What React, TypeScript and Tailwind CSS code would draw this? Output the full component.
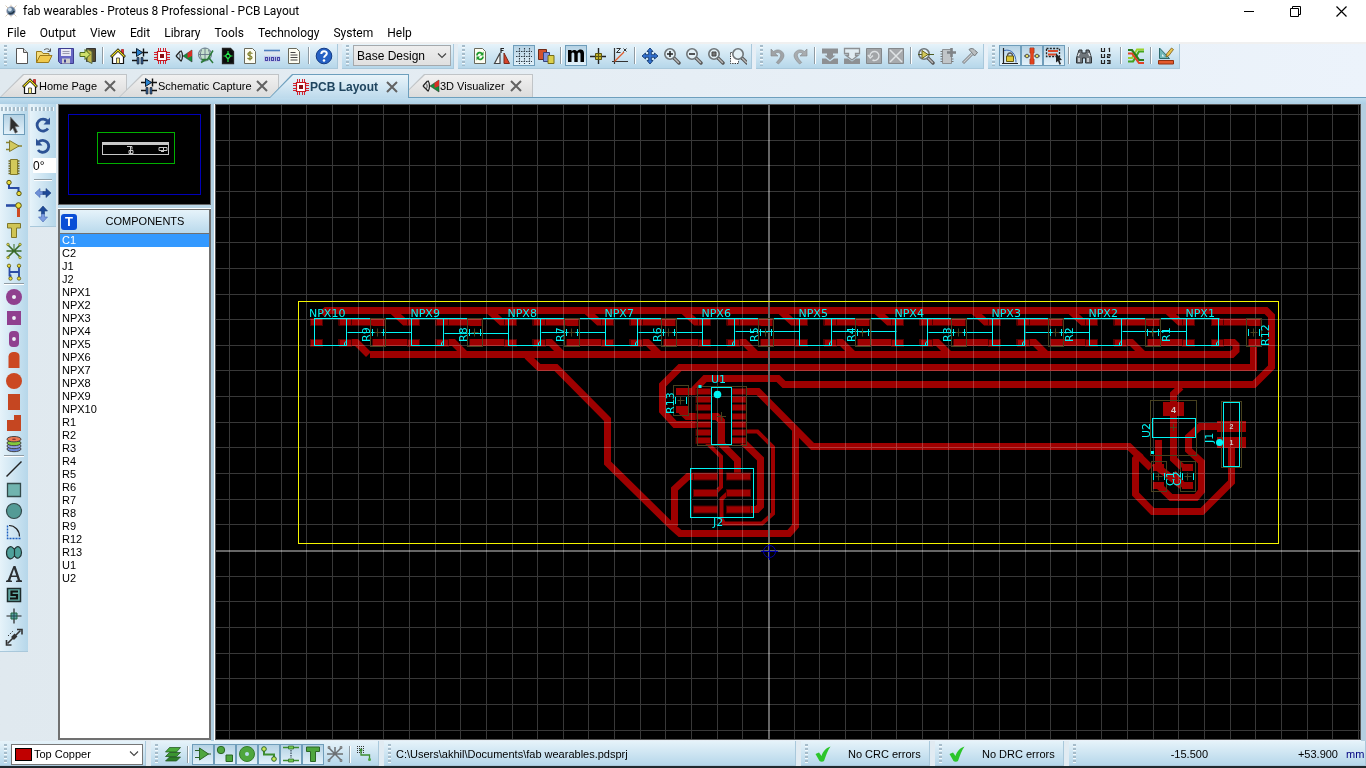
import React from "react";

type IconMap = Record<string, React.ReactNode>;

const lens = (
  <>
    <path d="M11 11l5 5" stroke="#555" strokeWidth="3.4" strokeLinecap="round" />
    <path d="M11.5 11.5l4 4" stroke="#bbb" strokeWidth="1.4" strokeLinecap="round" />
    <circle cx="7" cy="7" r="5.2" fill="#e3f0f6" stroke="#6f7578" strokeWidth="1.6" />
  </>
);

const docShape = <path d="M3.500 1.500h8l3 3v12h-11z" fill="#fdfdf2" stroke="#6a6a5c" />;

const ICONS: IconMap = {
  file: <><path d="M3.500 1.500h7l4 4v11h-11z" fill="#fff" stroke="#555" /><path d="M10.500 1.500v4h4" fill="#ddd" stroke="#555" /></>,
  open: <><path d="M1.500 15.500v-11h5l1.500 2h6v2" fill="#f5dd7a" stroke="#9a7a1c" /><path d="M1.500 15.500l3.500-7h12l-3.500 7z" fill="#f0c94c" stroke="#9a7a1c" /><path d="M9 3c2.500-2 5-1.500 6 1m.5-2.500v3h-3" fill="none" stroke="#555" /></>,
  save: <><path d="M1.500 1.500h15v15h-13l-2-2z" fill="#6767c4" stroke="#3d3d91" /><path d="M4 2h10v7H4z" fill="#e8e8f5" /><path d="M5.500 4.500h7M5.500 6.500h7" stroke="#9a9ab0" /><path d="M5 11.500h8v5H5z" fill="#ccc" /><path d="M7 12.500h2v3H7z" fill="#3d3d91" /></>,
  exit: <><path d="M7.500 1.500h9v13h-9z" fill="#554b2c" stroke="#333" /><path d="M8 2l5 2.500v12L8 14z" fill="#c3b84a" stroke="#564" /><path d="M1 5.500h5v-3l5 5-5 5v-3H1z" fill="#cfe06a" stroke="#4d6b1d" /></>,
  home: <><path d="M12.500 2.500h2v5h-2z" fill="#e33" stroke="#900" strokeWidth=".6" /><path d="M3.500 8.500v8h11v-8l-5.500-5z" fill="#fff" stroke="#111" strokeWidth="1.200" /><path d="M2 10L9 3l7 7" fill="none" stroke="#111" strokeWidth="2.600" /><path d="M2.500 9.500L9 3l6.500 6.500" fill="none" stroke="#f0e020" strokeWidth="1.200" /><path d="M7.500 11h3v5.500h-3z" fill="#f6ea84" stroke="#333" strokeWidth=".8" /></>,
  schem: <><path d="M1 5.500h16M1 13.500h5M12 13.500h5" stroke="#111" strokeWidth="1.300" /><path d="M5.500 1.500l6 4-6 4z" fill="#2882d0" stroke="#123" /><path d="M12.500 1.500v8" stroke="#111" strokeWidth="1.400" /><path d="M6 10.500h2v6.500H6zM10 10.500h2v6.500h-2z" fill="#35619a" stroke="#111" strokeWidth=".6" /></>,
  pcb: <><path d="M5.500 1v16M7.500 1v16M10.500 1v16M12.500 1v16M1 5.500h16M1 7.500h16M1 10.500h16M1 12.500h16" stroke="#d2222e" /><path d="M4.500 4.500h9v9h-9z" fill="#fff" stroke="#c8141e" strokeWidth="1.200" /><path d="M7 7h4v4H7z" fill="#8b0d14" /></>,
  viz: <><path d="M1 9l4.500-5M1 9l5 5M6 3.500c2 3 2 8 0 11" fill="none" stroke="#222" strokeWidth="1.200" /><path d="M4 6.500c1.500 1 1.500 4 0 5.500" fill="none" stroke="#444" /><path d="M8 9l9-6v12z" fill="#12913a" stroke="#333" strokeWidth=".6" /><path d="M12.500 6L17 3v6l-4.500 2z" fill="#d82e25" /></>,
  globe: <><circle cx="8" cy="7.500" r="6.500" fill="#c5e0cd" stroke="#678" /><path d="M1.500 7.500h13M8 1v13M4.500 3c-1.500 3-1.500 6 0 9M11.500 3c1.500 3 1.500 6 0 9" fill="none" stroke="#678" strokeWidth=".9" /><path d="M4.500 12.500h6l5.500-9M12 11l4 5M4 15.500l5-3" fill="none" stroke="#2b7a39" strokeWidth="1.500" /></>,
  code: <><path d="M3.500 1.500h8l3 3v12h-11z" fill="#0b0b0b" stroke="#222" strokeWidth="1.300" /><path d="M4.500 9h2l2.500-3 2.500 3L9 12 6.500 9M11.500 9h2M9 4v2M9 12v3" fill="none" stroke="#25e34b" strokeWidth="1.200" /></>,
  bom: <>{docShape}<path d="M11.500 6.500c-3-1.500-5-.5-4.500 1s4 1 4 3-3 2-4.500.5M9 4v9.500" fill="none" stroke="#7c7c25" strokeWidth="1.200" /></>,
  hex: <><path d="M1 3h16v5H1z" fill="#dfe6ee" /><path d="M1 3.500h16" stroke="#4f7fc0" strokeWidth="1.600" /><path d="M1 9h16v6H1z" fill="#c5cdea" /><path d="M2.500 10.500h2v3h-2zM6.500 10v4M8.500 10.500h2v3h-2zM12.500 10v4M14.500 10.500h2v3h-2z" fill="none" stroke="#4646a8" strokeWidth="1.100" /></>,
  notes: <>{docShape}<path d="M5.500 5.500h5M5.500 8h7M5.500 10.500h7M5.500 13h7" stroke="#444" /></>,
  help: <><circle cx="9" cy="9" r="7.800" fill="#2560c4" stroke="#133c86" /><path d="M6.300 7c0-3.700 5.500-3.500 5.500-.5 0 2-2.700 2-2.700 4.300" fill="none" stroke="#fff" strokeWidth="2" /><circle cx="9" cy="13.500" r="1.300" fill="#fff" /></>,
  refresh: <>{docShape}<path d="M6 8.500c0-3 4-4 5-1.500M12 9.500c0 3-4 4-5 1.500" fill="none" stroke="#1e9a2c" strokeWidth="1.700" /><path d="M12.500 4.500v4H9zM5.500 13.500v-4H9z" fill="#1e9a2c" /></>,
  mirror: <><path d="M1.500 16.500L7 6v10.500z" fill="#f2f5f5" stroke="#444" strokeWidth="1.200" /><path d="M11 6l5.500 10.500H11z" fill="#d7432a" stroke="#7a2a1a" /><path d="M8 6V1.500h3M8 3.500h2.500" fill="none" stroke="#222" strokeWidth="1.200" /></>,
  grid: <path d="M4.500 1v16M9.500 1v16M14.500 1v16M1 4.500h16M1 9.500h16M1 14.500h16" stroke="#2f3b45" strokeWidth="1.100" strokeDasharray="1.500 1" />,
  layers: <><path d="M1.500 2.500h8v10h-8z" fill="#d1512f" stroke="#6f2a17" /><path d="M6.500 5.500h6v9h-6z" fill="#7f92de" stroke="#37447e" /><path d="M11 8.500h6v8h-6z" fill="#dcd04a" stroke="#746d1a" /></>,
  metric: <path d="M1 3h3.500v1.500C6 2.500 9 2.500 10 4.500c2-3 7-2.500 7 1.500v9h-3.500V7c0-2-2.800-2-2.800 0v8H7.300V7c0-2-2.800-2-2.800 0v8H1z" fill="#000" />,
  origin: <><path d="M9.500 1v16M1 9.500h16" stroke="#222" strokeWidth="1.400" /><path d="M6.500 6.500h6v6h-6z" fill="#c3b42b" stroke="#5a5412" /><path d="M9.500 6.500v6M6.500 9.500h6" stroke="#5a5412" /></>,
  polar: <><path d="M3.500 1v16M1 14.500h16" stroke="#333" strokeWidth="1.200" /><path d="M3.500 14.500L13 5" stroke="#e05a2a" strokeWidth="1.200" /><path d="M5.500 1.500h4l-4 4h4M12.500 1.500l3 3M15.500 1.500l-3 3" fill="none" stroke="#333" /></>,
  pan: <path d="M9 1l3 3.500h-1.700V7.700h3.200V6L17 9l-3.500 3v-1.700h-3.200v3.200H12L9 17l-3-3.500h1.700v-3.200H4.500V12L1 9l3.500-3v1.700h3.200V4.500H6z" fill="#3272d2" stroke="#12396f" strokeWidth=".9" />,
  zoomin: <>{lens}<path d="M4 7h6M7 4v6" stroke="#222" strokeWidth="1.500" /></>,
  zoomout: <>{lens}<path d="M4 7h6" stroke="#222" strokeWidth="1.500" /></>,
  zoomall: <>{lens}<path d="M5 5h4v4H5z" fill="#777" stroke="#444" /></>,
  zoomarea: <><path d="M1.500 5.500h8v11h-8z" fill="#fff" stroke="#222" strokeDasharray="1.200 1.200" /><g transform="translate(2 0)">{lens}</g></>,
  undo: <path d="M2 2v7h7L6.300 6.500c3-2.500 6.500 0 5 3.500-.8 2-2.300 3.500-4 5.500l2.200 1.500c4-4 6.500-7 5-10.500-1.700-3.800-6.500-4.800-10-2z" fill="#a0a3a6" stroke="#83888c" strokeWidth=".6" />,
  redo: <path d="M16 2v7H9l2.700-2.500c-3-2.500-6.500 0-5 3.500.8 2 2.300 3.500 4 5.500L8.500 17C4.500 13 2 10 3.500 6.500c1.700-3.800 6.500-4.800 10-2z" fill="#a9acaf" stroke="#83888c" strokeWidth=".6" />,
  bcopy: <path d="M1 1.500h16v5h-5v2h2.500L9 13 3.500 8.500H6v-2H1zM1 11.500h4l4 3 4-3h4V17H1z" fill="#8d9093" />,
  bmove: <><path d="M1.500 6.500v-5h15v5h-4v2H15l-6 4.500-6-4.500h2.500v-2z" fill="#e1ecf2" stroke="#8d9093" strokeWidth="1.300" /><path d="M1 11.500h4l4 3 4-3h4V17H1z" fill="#8d9093" /></>,
  brot: <><path d="M1.500 1.500h15v15h-15z" fill="#a2a5a8" stroke="#84888b" /><path d="M5 9a4.500 4.500 0 1 1 2.500 4M3 8l2.200 3L8 8.500" fill="none" stroke="#dde1e4" strokeWidth="1.400" /></>,
  bdel: <><path d="M1.500 1.500h15v15h-15z" fill="#a7aaad" stroke="#84888b" /><path d="M3 3l12 12M15 3L3 15" stroke="#e0e4e6" strokeWidth="1.500" /></>,
  pick: <>{lens}<path d="M1 7.500h16" stroke="#4b5a22" /><path d="M5 3.500l6 4-6 4z" fill="#d4ca5a" stroke="#6c6422" /></>,
  pkg: <><path d="M3.500 2.500h9v14h-9z" fill="#c1c5c8" stroke="#8d9194" /><path d="M1.500 4.500h2M1.500 7h2M1.500 9.500h2M1.500 12h2M1.500 14.500h2M12.500 12h2M12.500 14.500h2" stroke="#777" /><path d="M12.500 1v9M8 5.500h9" stroke="#7f8386" strokeWidth="2.600" /></>,
  hammer: <><path d="M2 16L11 7" stroke="#7d8184" strokeWidth="3" /><path d="M2.500 15.500L11 7" stroke="#c9cdcf" strokeWidth="1.200" /><path d="M8 2.500c3-2 5-.5 6 1l2.500 2-3 3.500-2-2.500c-1-1-2-2.500-3.500-4z" fill="#b9bdbf" stroke="#73777a" /></>,
  lock: <><path d="M2.500 1v16M1 16.500h16" stroke="#222" strokeWidth="1.200" /><path d="M3 3.500c8-2 12 4 12 12" fill="none" stroke="#3a68b2" /><path d="M6.500 9c0-4 5-4 5 0" fill="none" stroke="#555" strokeWidth="1.300" /><path d="M5.500 9h7v5.500h-7z" fill="#dfc935" stroke="#645a14" /></>,
  neck: <><path d="M7 1h4v5h-1v6h1v5H7v-5h1V6H7z" fill="#e1421c" stroke="#8f2a10" strokeWidth=".8" /><path d="M1 9h6M11 9h6" stroke="#444" /><path d="M7.500 1h3v16h-3z" fill="#e1421c" /><circle cx="4" cy="9" r="1.800" fill="#e6de60" stroke="#555" /><circle cx="14" cy="9" r="1.800" fill="#e6de60" stroke="#555" /></>,
  select: <><path d="M1.500 1.500h13v8h-13z" fill="none" stroke="#222" strokeWidth="1.300" strokeDasharray="2 1.300" /><path d="M3 4h10M3 7.500h8" stroke="#d9482a" strokeWidth="2" /><path d="M11 6l6 7-2.500.3L16 17l-1.500.7-1.500-3.800L11 15.500z" fill="#222" /></>,
  search: <><path d="M4 3h3v3h4V3h3l2.500 8v5h-6v-5h-3v5h-6v-5z" fill="#6f767b" stroke="#2e3336" /><path d="M3 9l1.500-3M15 9l-1.500-3M4 11v4M13 11v4" stroke="#dfe4e7" strokeWidth="1.500" /></>,
  annot: <path d="M4.500 1v3.500h3V1M11.500 2l1-.5V5M4.500 7v3.500h3V7M10 7.500h3v1.500h-2.500v1.500H13M4.500 13v3.500h3V13M10 13.500h3v3h-3M10.500 15H13" fill="none" stroke="#222" strokeWidth="1.200" />,
  auto: <><path d="M1 14.500h5l6-10h5" fill="none" stroke="#43a51f" strokeWidth="2.200" /><path d="M1 11h4l5-8.500h7" fill="none" stroke="#9bd22d" strokeWidth="1.800" /><path d="M1 3h4l7 10h5" fill="none" stroke="#2a7b1c" strokeWidth="2.200" /><path d="M1 6.500h4l7 9.500h5" fill="none" stroke="#e04326" strokeWidth="2" /></>,
  drc: <><path d="M2.500 1v10.500h10z" fill="#6fb8b8" stroke="#2d6a6c" /><path d="M5 7v2.500h2.500z" fill="#e6f3f7" /><path d="M16.500 2.500l-2-1.500-5 6-.5 3 2.800-1.300z" fill="#e8c450" stroke="#7b5a1c" strokeWidth=".8" /><path d="M1.500 13.500h15V17h-15z" fill="#e35a2c" stroke="#93310f" /></>,
  arrow: <path d="M5.500 1l8.500 9.500-4 .2L12.500 16l-2.300 1.200-2.300-5-2.900 2.800z" fill="#2e2e2e" stroke="#777" strokeWidth=".7" />,
  comp: <><path d="M1 5.500h4M1 12.500h4M13 9h4" stroke="#8c8430" strokeWidth="1.300" /><path d="M4.500 3.500L14 9l-9.500 5.500z" fill="#d2c95e" stroke="#81792c" /></>,
  chip: <><path d="M3.500 3h11M3.500 5.500h11M3.500 8h11M3.500 10.500h11M3.500 13h11M3.500 15.500h11" stroke="#6d6620" strokeWidth="1.300" /><path d="M5.500 1.500h7v15h-7z" fill="#d3c95a" stroke="#7f772a" /></>,
  track: <><path d="M4 4v5h9.500v5" fill="none" stroke="#2a4ca5" strokeWidth="2" /><circle cx="4" cy="3.500" r="2.200" fill="#e9dd3c" stroke="#5a5415" /><circle cx="14" cy="14.500" r="2.200" fill="#e9dd3c" stroke="#5a5415" /></>,
  via: <><path d="M1 5.500h10" stroke="#2a4ca5" strokeWidth="2.600" /><path d="M13.500 7v10" stroke="#ce4a22" strokeWidth="3" /><circle cx="13.500" cy="5.500" r="2.800" fill="#e9dd3c" stroke="#5a5415" /></>,
  zone: <path d="M2.500 2.500h13v4.500h-4v9.500h-5V7h-4z" fill="#cfc455" stroke="#7f772a" />,
  rats: <><path d="M3 3l12 12M15 3L3 15M1.500 9h15" stroke="#3a6b28" strokeWidth="1.600" /><path d="M9 2v7" stroke="#3a6b28" /><g fill="#dcd250" stroke="#5a6415" strokeWidth=".6"><circle cx="3" cy="2.500" r="1.300" /><circle cx="15" cy="2.500" r="1.300" /><circle cx="3" cy="15.500" r="1.300" /><circle cx="15" cy="15.500" r="1.300" /></g></>,
  conn: <><path d="M4.500 3v6h9.500V3M4.500 9v3.500h1V15M14 9v6" fill="none" stroke="#2a4ca5" strokeWidth="1.800" /><g fill="#e9dd3c" stroke="#5a5415" strokeWidth=".8"><circle cx="4" cy="2.800" r="1.700" /><circle cx="14" cy="2.800" r="1.700" /><circle cx="5.500" cy="15.500" r="1.700" /><circle cx="14" cy="15.500" r="1.700" /></g></>,
  padround: <><circle cx="9" cy="9" r="8" fill="#90408f" /><circle cx="9" cy="9" r="2" fill="#eef4f8" /></>,
  padsq: <><path d="M2 2h14v14H2z" fill="#90408f" /><circle cx="9" cy="9" r="1.900" fill="#eef4f8" /></>,
  paddil: <><rect x="4" y="1" width="10" height="16" rx="4" fill="#90408f" /><circle cx="9" cy="9" r="1.900" fill="#eef4f8" /></>,
  padedge: <path d="M3.500 17V5.500C4 2 6 1 9 1s5.500 1 5.500 4.500V17z" fill="#cb4822" />,
  padcirc: <circle cx="9" cy="9" r="8" fill="#cb4822" />,
  padrect: <path d="M3 1h12v16H3z" fill="#c54621" />,
  padpoly: <path d="M2 6h7V1h7v16H2z" fill="#c54621" />,
  stack: <><ellipse cx="9" cy="14" rx="7" ry="2.700" fill="#6b86d8" stroke="#444" /><ellipse cx="9" cy="11" rx="7" ry="2.700" fill="#8c9ce0" stroke="#444" /><ellipse cx="9" cy="8" rx="7" ry="2.700" fill="#82c83c" stroke="#444" /><ellipse cx="9" cy="4.200" rx="7" ry="2.700" fill="#ef7a52" stroke="#444" /><ellipse cx="9" cy="4.200" rx="2" ry=".8" fill="#833" /></>,
  line: <path d="M1.500 16.500l15-15" stroke="#222" strokeWidth="1.400" />,
  rect: <path d="M2.500 2.500h13v13h-13z" fill="#70b4af" stroke="#33494a" strokeWidth="1.300" />,
  circle: <circle cx="9" cy="9" r="7.500" fill="#549b96" stroke="#33494a" strokeWidth="1.200" />,
  arc: <><path d="M2.500 2.500v13h13" fill="none" stroke="#1d5fc0" strokeWidth="1.400" strokeDasharray="2 1" /><path d="M4 2.500c6 0 10.500 5 10.500 11" fill="none" stroke="#222" strokeWidth="1.200" /></>,
  path: <path d="M8.500 4.500C6 .5 1.500 3.500 1.500 9S6 16.500 8.500 13c.5-1 1.500-1 2 0 2.500 3 6-.5 6-4.500s-3-8-6-4.500c-.5.8-1.500 1-2 .5zM9.500 4.500v8.500" fill="#4ea09b" stroke="#233" strokeWidth="1.200" />,
  text: <path d="M8.500 1h2l4.700 14 1.800.5V17h-6v-1.300l1.800-.4-1-3.300H6.300l-1 3.300 1.700.4V17H1v-1.300l1.800-.6zM6.800 10.500h4.500L9 4z" fill="#2c3033" fillRule="evenodd" />,
  symbol: <><path d="M2.500 2.500h13v13h-13z" fill="#62aaa5" stroke="#1d2b2b" strokeWidth="1.500" /><path d="M13 5.500H6.500V9H12v3.500H5" fill="none" stroke="#111" strokeWidth="2.200" /></>,
  marker: <><path d="M9 1.500v15M1.500 9h15" stroke="#222" strokeWidth="1.200" /><path d="M6 6h6v6H6z" fill="#57a59f" stroke="#264" /><path d="M9 6v6M6 9h6" stroke="#245" /></>,
  dim: <><path d="M2.500 15.500L15.500 2.500" stroke="#333" strokeWidth="1.600" /><path d="M12 1.500h5v5M1.500 12v5h5" fill="none" stroke="#333" strokeWidth="1.600" /><path d="M7.500 10.500l3.500-3.500" stroke="#333" strokeWidth="4" /><path d="M3 8l5-5" stroke="#333" strokeDasharray="1.500 1.500" /></>,
  cw: <><path d="M13.500 5A6 6 0 1 0 14 12.500" fill="none" stroke="#2c5295" strokeWidth="2.800" /><path d="M16 1.500V8.500H9.500z" fill="#2c5295" /></>,
  ccw: <><path d="M4.500 5A6 6 0 1 1 4 13" fill="none" stroke="#2c5295" strokeWidth="2.800" /><path d="M2 1.500V8.500h6.500z" fill="#2c5295" /></>,
  fliph: <><path d="M9 7.500H6V4.500L1 9l5 4.500v-3h3z" fill="#6f91d8" stroke="#466ab4" strokeWidth=".6" /><path d="M9 7.500h3V4.500L17 9l-5 4.500v-3H9z" fill="#1e4a98" stroke="#173a78" strokeWidth=".6" /></>,
  flipv: <><path d="M7.500 9V6h-3L9 1l4.500 5h-3v3z" fill="#1e4a98" stroke="#173a78" strokeWidth=".6" /><path d="M7.500 9v3h-3L9 17l4.500-5h-3V9z" fill="#7d9ce0" stroke="#466ab4" strokeWidth=".6" /></>,
  slayers: <><path d="M1.500 16l4-4h11l-4 4z" fill="#2f7f29" stroke="#1b4f18" strokeWidth=".7" /><path d="M1.500 11.500l4-4h11l-4 4z" fill="#3b9530" stroke="#1b4f18" strokeWidth=".7" /><path d="M1.500 7l4-4.500h11l-4 4.500z" fill="#4bab3a" stroke="#1b4f18" strokeWidth=".7" /></>,
  scomp: <><path d="M1 5.500h5M1 12.500h5M13 9h4" stroke="#2b5f27" strokeWidth="1.200" /><path d="M5.500 3l9 6-9 6z" fill="#4ea63e" stroke="#2b6626" /></>,
  sshape: <><circle cx="5" cy="5" r="3.700" fill="#4ea63e" stroke="#2b6626" /><path d="M10 10h6.500v6.500H10z" fill="#4ea63e" stroke="#2b6626" /></>,
  spad: <><circle cx="9" cy="9" r="7.500" fill="#4ea63e" stroke="#357d2b" /><circle cx="9" cy="9" r="2" fill="#b7dcef" /></>,
  strack: <><path d="M4 4v5.500h10V14" fill="none" stroke="#3c8d30" strokeWidth="2" /><circle cx="4" cy="4" r="2.300" fill="#c9e85a" stroke="#2b6626" /><circle cx="14" cy="14" r="2.300" fill="#c9e85a" stroke="#2b6626" /></>,
  svia: <><path d="M1 2.500h16M1 15.500h16" stroke="#3c8d30" strokeWidth="1.500" /><path d="M6.500 1h5v3h-5zM6.500 14h5v3h-5z" fill="#73c94c" stroke="#2b6626" strokeWidth=".7" /><path d="M9 5v8" stroke="#345" strokeWidth="1.200" strokeDasharray="1.500 1" /></>,
  szone: <path d="M2.500 2h13v4.500h-4v10h-5v-10h-4z" fill="#4ea63e" stroke="#2b6626" />,
  srats: <><path d="M3 3l12 12M15 3L3 15M1 9h16M9 2v7" stroke="#6c7073" strokeWidth="1.500" /><path d="M2 1.500h2v2H2zM14 1.500h2v2h-2zM2 14.500h2v2H2zM14 14.500h2v2h-2z" fill="#9a9da0" stroke="#666" strokeWidth=".6" /></>,
  sfilter: <><path d="M1 1.500h7M1 3.500h7M1 5.500h7M1 7.500h7" stroke="#333" strokeDasharray="1 1" /><path d="M5 5v5h8.500v4" fill="none" stroke="#3c8d30" strokeWidth="1.300" /><circle cx="5" cy="5" r="1.500" fill="#3c8d30" /><circle cx="13.500" cy="14.500" r="1.500" fill="#4ea63e" /></>,
  check: <path d="M1.500 9l3.500-1.500 2.500 3.500C9 6.500 11.500 3 16.500 1.500c-3 4-4.500 9-6.500 14.500-1 1-3.500 1-4.500 0z" fill="#2cc52b" />,
  app: <><path d="M2 2l14 14M16 2L2 16M9 1v16" stroke="#c9b99d" strokeWidth="1" /><circle cx="9" cy="9" r="5.500" fill="#5b7894" stroke="#aab" /><circle cx="7.500" cy="7" r="2.500" fill="#c7dbea" /><path d="M6 12c3 1 6 0 7-3" stroke="#23374a" strokeWidth="2" fill="none" /></>,
};

function Icon({ name, className = "size-[18px]" }: { name: string; className?: string }) {
  return (
    <svg viewBox="0 0 18 18" fill="none" aria-hidden="true" className={`shrink-0 ${className}`}>
      {ICONS[name]}
    </svg>
  );
}

function HGrip() {
  return (
    <span className="mx-1 my-px w-[3px] shrink-0 self-stretch bg-[repeating-linear-gradient(to_bottom,#a6bcca_0_2px,#f4fafd_2px_3px,transparent_3px_4px)]" />
  );
}

function HSep() {
  return (
    <span className="flex w-2 shrink-0 justify-center">
      <span className="h-[17px] w-0.5 border-r border-white bg-[#8f9ba3]" />
    </span>
  );
}

function ToolButton({ item }: { item: string }) {
  const on = item.startsWith("*");
  const name = on ? item.slice(1) : item;
  return (
    <button
      type="button"
      aria-label={name}
      aria-pressed={on}
      className={`flex h-[21px] w-[22px] shrink-0 items-center justify-center ${
        on ? "border border-[#6f9dba] bg-linear-to-b from-[#b5d2e4] to-[#e2f1fa]" : ""
      }`}
    >
      <Icon name={name} />
    </button>
  );
}

/* Entries starting with "*" are latched down; "|" is a divider. */
function Buttons({ items }: { items: string[] }) {
  return (
    <>
      {items.map((it, i) => (it === "|" ? <HSep key={i} /> : <ToolButton key={i} item={it} />))}
    </>
  );
}

const BAR = "flex shrink-0 items-center border-r border-b border-[#a9c8db] bg-linear-to-b from-[#e6f3fa] to-[#b6d7ea]";

function Toolbar({ items, children, className = "h-[25px] pb-px" }: { items?: string[]; children?: React.ReactNode; className?: string }) {
  return (
    <div role="toolbar" className={`${BAR} pr-0.5 ${className}`}>
      <HGrip />
      {children}
      {items && <Buttons items={items} />}
    </div>
  );
}

function VToolbar({ children, className }: { children: React.ReactNode; className: string }) {
  return (
    <div
      role="toolbar"
      className={`flex shrink-0 flex-col items-center self-start border-b border-[#a9c8db] bg-linear-to-r from-[#e6f3fa] to-[#b6d7ea] ${className}`}
    >
      <span className="mx-px my-[3px] h-1 self-stretch bg-[repeating-linear-gradient(to_right,#a6bcca_0_2px,#f4fafd_2px_3px,transparent_3px_4px)]" />
      {children}
    </div>
  );
}

function VButtons({ items }: { items: string[] }) {
  return (
    <>
      {items.map((it, i) =>
        it === "|" ? (
          <span key={i} className="flex h-1 items-center self-stretch px-1">
            <span className="h-0.5 w-full border-b border-white bg-[#8f9ba3]" />
          </span>
        ) : (
          <ToolButton key={i} item={it} />
        ),
      )}
    </>
  );
}

function Tab({ icon, label, active, className = "" }: { icon: string; label: string; active?: boolean; className?: string }) {
  return (
    <div
      className={`shrink-0 pt-px pr-px [clip-path:polygon(23px_0,100%_0,100%_100%,0_100%)] ${
        active ? "z-10 h-6 bg-[#6d9fbd]" : "h-[23px] bg-[#c0c4c7]"
      } ${className}`}
    >
      <div
        className={`flex h-full items-center [clip-path:polygon(24px_0,100%_0,100%_100%,1px_100%)] ${
          active ? "bg-linear-to-b from-[#e9f4fa] to-[#bddaec] pl-[23px]" : "bg-linear-to-b from-[#f1f1f1] to-[#dcdcdc] pl-[21px]"
        }`}
      >
        <button type="button" className={`flex items-center ${active ? "text-[12px] font-bold text-[#20455f]" : "text-black"}`}>
          <Icon name={icon} />
          <span className="whitespace-nowrap">{label}</span>
        </button>
        <button type="button" aria-label={`Close ${label}`} className="mr-[9px] ml-auto">
          <svg viewBox="0 0 14 14" className="size-3.5">
            <path d="M2 2l10 10M12 2L2 12" stroke="#626262" strokeWidth="2" />
          </svg>
        </button>
      </div>
    </div>
  );
}

const PARTS = [
  "C1", "C2", "J1", "J2", "NPX1", "NPX2", "NPX3", "NPX4", "NPX5", "NPX6", "NPX7", "NPX8", "NPX9", "NPX10",
  "R1", "R2", "R3", "R4", "R5", "R6", "R7", "R8", "R9", "R12", "R13", "U1", "U2",
];

const CYAN = "#00f5f5";
const OLIVE = "#47411f";

function Label({ x, y, vertical, children }: { x: number; y: number; vertical?: boolean; children: string }) {
  return (
    <text
      x={x}
      y={y}
      transform={vertical ? `rotate(-90 ${x} ${y})` : undefined}
      fill={CYAN}
      className="font-['DejaVu_Sans',sans-serif] text-[11px]"
    >
      {children}
    </text>
  );
}

function Pad({ x, y, w, h }: { x: number; y: number; w: number; h: number }) {
  return <rect x={x} y={y} width={w} height={h} fill="#9e0000" stroke="#500000" />;
}

/* Two-pad chip part standing upright; x, y is the top left of its courtyard. */
function Chip({ x, y, h = 30 }: { x: number; y: number; h?: number }) {
  const cy = y + h / 2;
  return (
    <g>
      <rect x={x} y={y} width="15" height={h} fill="none" stroke={OLIVE} />
      <path d={`M${x + 4} ${cy}h7M${x + 7} ${cy - 4}v8`} stroke={OLIVE} />
      <path d={`M${x + 2} ${cy - 3.5}v7M${x + 13} ${cy - 3.5}v7`} stroke={CYAN} />
    </g>
  );
}

const MODULES = Array.from({ length: 10 }, (_, i) => Math.round(314 + 96.9 * i) + 0.5);
const LINK_Y = [332.5, 333.5, 332.5, 332.5, 331.5, 331.5, 332.5, 332.5, 331.5];

const ROUTES = [
  "M322 314L326 310.500H1266L1271.500 316V367L1254 384.500H784L778 378.500H705L694 390",
  "M1253.500 340V367.500H680L662.500 385V411L675 424.500H706",
  "M370 354.500H1232L1236 350.500V345L1233.500 342.500H1215",
  "M527 356L539 367.500H556L607.500 419.500V463L672 526.500L680 533.500H789L795.500 526V430",
  "M674.500 526V489L688 476.500H710",
  "M738 391.500H758L812.500 446.500H1129L1151 468",
  "M676 391.500H700M681 411L687 416.500H717L721.500 421V444L737.500 460V474",
  "M742 441L760.500 459V506L757 509.500H735",
  "M1220 322H1256M1181 387L1173.500 394V459L1182 467",
  "M1240 426.500H1200L1188.500 437V450L1201.500 462V491L1196 497.500H1171L1159 486",
  "M1141 453L1135.500 459V494L1152.500 511.500H1202L1231.500 482V444",
  "M1158.500 440V468L1182 486M1173 473L1183 486",
];

const THIN_ROUTES = [
  "M706 442L721 456.500V487L716 492",
  "M744 431.500H757.500L773 447V513.500L762 523.500H724L721.500 519V499L728 493",
];

/* Grid lines either side of the origin; the axes themselves are drawn brighter. */
const STEPS = Array.from({ length: 60 }, (_, i) => i - 30).filter((n) => n !== 0);
const GRID_X = STEPS.map((n) => Math.round(769 + n * 25.65) - 0.5);
const GRID_Y = STEPS.map((n) => Math.round(551 + n * 25.65) - 0.5);

function Board() {
  return (
    <svg viewBox="216 105 1144 634" preserveAspectRatio="xMidYMid slice" role="img" aria-label="PCB layout" className="block size-full" fill="none">
      <g stroke="#9e0000" strokeWidth="7">
        {ROUTES.map((d) => <path key={d} d={d} />)}
        {MODULES.map((x, i) => (
          <g key={x}>
            {i > 0 && <path d={`M${x - 20} 310L${x - 7} 322H${x + 8}`} />}
            {i < 9 && <path d={`M${x + 24} 322H${x + 68}M${x + 60} 342.500H${x + 100}M${x + 24} 342.500H${x + 42}L${x + 54} 354.500`} />}
          </g>
        ))}
      </g>
      <g stroke="#9e0000" strokeWidth="4">
        {THIN_ROUTES.map((d) => <path key={d} d={d} />)}
      </g>
      {MODULES.map((x, i) => (
        <g key={x}>
          {[-4, 25].map((dx) => [318.5, 339.5].map((y) => <Pad key={`${dx}-${y}`} x={x + dx} y={y} w={12} h={7} />))}
          {[319, 339].map((y) => <rect key={y} x={x + (i === 9 ? 62 : 58)} y={y} width="12" height="7" fill="#9e0000" />)}
        </g>
      ))}
      {[391.5, 399.5, 407.5, 416.5, 424.5, 432.5, 440.5].map((y) => (
        <g key={y}>
          <Pad x={696} y={y - 3} w={15} h={6} />
          <Pad x={732} y={y - 3} w={14} h={6} />
        </g>
      ))}
      {[476.5, 493, 509.5].map((y) => (
        <g key={y}>
          <Pad x={693.5} y={y - 3.5} w={24} h={7} />
          <Pad x={726.5} y={y - 3.5} w={24} h={7} />
        </g>
      ))}
      <g fill="#9e0000">
        <path d="M676 388h12v7h-12zM676 406h12v7h-12zM1163 402h21v14h-21z" />
        <path d="M1153 464h11v7h-11zM1153 482h11v7h-11zM1182 464h11v7h-11zM1182 482h11v7h-11z" />
        <path d="M1217 421h29v11h-29zM1217 437h29v11h-29z" />
      </g>

      <path d="M769 0V1000M0 551H1600" stroke="#666666" strokeWidth="2" />
      <g stroke="#383838" className="mix-blend-screen">
        {GRID_X.map((x) => <path key={x} d={`M${x} 0V1000`} />)}
        {GRID_Y.map((y) => <path key={y} d={`M0 ${y}H1600`} />)}
      </g>
      <g stroke="#0000a8">
        <circle cx="769.500" cy="551.500" r="6" />
        <path d="M761 551.500h17M769.500 543v17" />
      </g>

      <rect x="298.500" y="301.500" width="980" height="242" stroke="#f5f500" />

      <path d="M314.500 318.500H1219.500" stroke={CYAN} />
      {MODULES.map((x, i) => (
        <g key={x}>
          <rect x={x} y="318.500" width="32" height="27" stroke={CYAN} />
          <path d={`M${x + 30} 345v-2l2-2`} stroke={CYAN} />
          {i < 9 && <path d={`M${x + 33} ${LINK_Y[i]}H${x + 97}`} stroke={CYAN} />}
          <Chip x={x + (i < 9 ? 56 : 60)} y={318.5} h={28} />
          <Label x={i === 0 ? 309 : x - 1} y={317}>{`NPX${10 - i}`}</Label>
          {i < 7 && <Label x={x + 55} y={342} vertical>{`R${9 - i}`}</Label>}
          {(i === 7 || i === 8) && <Label x={x + 80} y={342} vertical>{`R${9 - i}`}</Label>}
        </g>
      ))}
      <Label x={1269} y={346} vertical>R12</Label>

      <Chip x={673.5} y={385.5} />
      <Label x={674} y={414} vertical>R13</Label>
      <rect x="697.500" y="386.500" width="49" height="59" stroke={OLIVE} />
      <path d="M717 416.500h9M721.500 412v9" stroke={OLIVE} />
      <rect x="711.500" y="387.500" width="20" height="57" stroke={CYAN} />
      <circle cx="717.500" cy="394.500" r="3.800" fill={CYAN} />
      <rect x="698.500" y="385" width="3" height="3" fill={CYAN} />
      <Label x={711} y={383}>U1</Label>
      <rect x="690.500" y="468.500" width="63" height="49" stroke={CYAN} />
      <Label x={713} y={526}>J2</Label>

      <rect x="1150.500" y="400.500" width="46" height="55" stroke={OLIVE} />
      <path d="M1170 427.500h7M1173.500 424v7" stroke={OLIVE} />
      <rect x="1152.500" y="418.500" width="43" height="19" stroke={CYAN} />
      <rect x="1151" y="451" width="3" height="3" fill={CYAN} />
      <Label x={1150} y={438} vertical>U2</Label>
      <Chip x={1151.5} y={461.5} />
      <Chip x={1180.5} y={461.5} />
      <Label x={1174} y={486} vertical>C1</Label>
      <Label x={1181} y={486} vertical>C2</Label>
      <rect x="1221.500" y="401.500" width="20" height="66" stroke={OLIVE} />
      <rect x="1223.500" y="402.500" width="16" height="64" stroke={CYAN} />
      <circle cx="1219.500" cy="442.500" r="3.500" fill={CYAN} />
      <Label x={1213} y={443} vertical>J1</Label>
      <g fill="#d0c8c8" textAnchor="middle" className="font-['Liberation_Sans',sans-serif] font-bold">
        <text x="1173.500" y="413" className="text-[9px]">4</text>
        <text x="1231.500" y="429" className="text-[7px]">2</text>
        <text x="1231.500" y="445" className="text-[7px]">1</text>
      </g>
    </svg>
  );
}

function Chevron() {
  return (
    <svg viewBox="0 0 10 6" className="pointer-events-none absolute top-1/2 right-1 h-1.5 w-2.5 -translate-y-1/2" fill="none">
      <path d="M1 .5l4 4 4-4" stroke="#444" strokeWidth="1.100" />
    </svg>
  );
}

const FOOT = "h-[25px] pt-0.5";

export default function App() {
  return (
    <div className="flex h-screen flex-col overflow-hidden bg-linear-to-r from-[#e0e9ef] to-[#ecf3fb] font-['Liberation_Sans',Arial,sans-serif] text-[11px] text-black select-none">
      <header className="shrink-0 bg-white font-[Roboto,'Noto_Sans',sans-serif] text-[12px]">
        <div className="flex h-[22px] items-center pr-0.5 pl-1">
          <Icon name="app" className="size-3.5" />
          <h1 className="ml-[5px]">fab wearables - Proteus 8 Professional - PCB Layout</h1>
          <div className="ml-auto flex">
            <button type="button" aria-label="Minimize" className="flex w-[46px] justify-center">
              <svg viewBox="0 0 11 11" className="size-[11px]" stroke="#000"><path d="M0 5.500h10" /></svg>
            </button>
            <button type="button" aria-label="Restore" className="flex w-[46px] justify-center">
              <svg viewBox="0 0 11 11" className="size-[11px]" stroke="#000" fill="none"><path d="M.5 2.500h8v8h-8zM2.500 2.500v-2h8v8h-2" /></svg>
            </button>
            <button type="button" aria-label="Close" className="flex w-[46px] justify-center">
              <svg viewBox="0 0 11 11" className="size-[11px]" stroke="#000"><path d="M.5 .5l10 10M10.500 .5l-10 10" strokeWidth="1.200" /></svg>
            </button>
          </div>
        </div>
        <nav className="flex h-5 items-center gap-[14px] pt-0.5 pl-[7px]">
          {["File", "Output", "View", "Edit", "Library", "Tools", "Technology", "System", "Help"].map((m) => (
            <button key={m} type="button">{m}</button>
          ))}
        </nav>
      </header>

      <div className="flex shrink-0 gap-1 border-t-2 border-[#f0f0f0]">
        <Toolbar items={["file", "open", "save", "exit", "|", "home", "schem", "pcb", "viz", "globe", "code", "bom", "hex", "notes", "|", "help"]} />
        <Toolbar>
          <div className="relative w-[98px]">
            <select aria-label="Design variant" className="h-[21px] w-full appearance-none border border-[#a5a9ac] bg-linear-to-b from-[#eeeeee] to-[#e0e0e0] pl-[3px] text-[12px]">
              <option>Base Design</option>
            </select>
            <Chevron />
          </div>
        </Toolbar>
        <Toolbar items={["refresh", "mirror", "*grid", "layers", "|", "*metric", "origin", "polar", "|", "pan", "zoomin", "zoomout", "zoomall", "zoomarea"]} />
        <Toolbar items={["undo", "redo", "|", "bcopy", "bmove", "brot", "bdel", "|", "pick", "pkg", "hammer"]} />
        <Toolbar items={["*lock", "*neck", "*select", "|", "search", "annot", "|", "auto", "|", "drc"]} />
      </div>

      <div className="flex h-7 shrink-0 items-start pt-[5px]">
        <Tab icon="home" label="Home Page" className="w-[127px]" />
        <Tab icon="schem" label="Schematic Capture" className="-ml-2 w-[160px]" />
        <Tab icon="pcb" label="PCB Layout" active className="-ml-2.5 w-[140px]" />
        <Tab icon="viz" label="3D Visualizer" className="-ml-2 w-[132px]" />
      </div>
      <div className="h-[7px] shrink-0 border-t border-[#6d9fbd] bg-linear-to-b from-[#c0ddee] to-[#accfe5]" />

      <main className="flex min-h-0 flex-1">
        <VToolbar className="w-7 pb-1">
          <VButtons
            items={[
              "*arrow", "comp", "chip", "track", "via", "zone", "rats", "conn", "|",
              "padround", "padsq", "paddil", "padedge", "padcirc", "padrect", "padpoly", "stack", "|",
              "line", "rect", "circle", "arc", "path", "text", "symbol", "marker", "dim",
            ]}
          />
        </VToolbar>
        <VToolbar className="ml-0.5 w-[26px] pb-0.5">
          <VButtons items={["cw", "ccw"]} />
          <input aria-label="Rotation angle" defaultValue="0°" className="my-0.5 h-[15px] w-[23px] self-end bg-white text-[12px]" />
          <span className="h-[3px]" />
          <VButtons items={["|", "fliph", "flipv"]} />
        </VToolbar>

        <aside className="ml-0.5 flex w-[153px] shrink-0 flex-col">
          <div className="h-[101px] shrink-0 border border-[#666] bg-black">
            <svg viewBox="59 105 151 99" className="size-full" fill="none">
              <rect x="68.500" y="114.500" width="132" height="80" stroke="#0000b8" />
              <rect x="97.500" y="132.500" width="77" height="31" stroke="#00b000" />
              <rect x="102.500" y="142.500" width="66" height="12" stroke="#c8c8c8" />
              <path d="M103 143.500h65" stroke="#c8c8c8" strokeWidth="3" />
              <path d="M127 146.500h5v3M130.500 146v7M129 150.500h4v3h-4zM159 147.500h8v3h-8zM161 151.500h3M163.500 147v4" stroke="#c8c8c8" />
            </svg>
          </div>
          <div className="h-1 shrink-0 border-b border-white bg-[#b9d5e6]" />
          <section className="mb-px flex min-h-0 flex-1 flex-col border-2 border-t border-[#707070]">
            <div className="flex h-6 shrink-0 items-center border-b border-[#707070] bg-linear-to-b from-[#e6f3fa] to-[#b9d9ec]">
              <button type="button" aria-label="Pick devices" className="ml-px flex size-4 items-center justify-center rounded-[3px] bg-[#0a4fd6] text-[13px] font-bold text-white">T</button>
              <h2 className="flex-1 pl-1 text-center">COMPONENTS</h2>
            </div>
            <ul role="listbox" aria-label="Components" className="min-h-0 flex-1 overflow-hidden bg-white">
              {PARTS.map((p, i) => (
                <li key={p} role="option" aria-selected={i === 0} className={`pl-0.5 leading-[13px] ${i === 0 ? "bg-[#3399ff] text-white" : ""}`}>
                  {p}
                </li>
              ))}
            </ul>
          </section>
        </aside>
        <div className="w-1 shrink-0 border-r border-white bg-[#b0cee0]" />
        <div className="mb-px min-w-0 flex-1 border border-[#555] bg-black">
          <Board />
        </div>
        <div className="w-[5px] shrink-0 bg-[#b4cfe0]" />
      </main>

      <footer className="flex shrink-0 gap-[5px] border-b-2 border-[#20282d] bg-[#e1ebf2]">
        <Toolbar className={FOOT}>
          <div className="relative w-[132px]">
            <span className="pointer-events-none absolute top-1 left-1 h-[13px] w-[17px] border border-black bg-[#c00000]" />
            <select aria-label="Layer" className="h-[21px] w-full appearance-none border border-[#777] bg-white pl-[22px]">
              <option>Top Copper</option>
            </select>
            <Chevron />
          </div>
        </Toolbar>
        <Toolbar className={FOOT} items={["slayers", "|", "*scomp", "*sshape", "*spad", "*strack", "*svia", "*szone", "srats", "|", "sfilter"]} />
        <div className={`${BAR} ${FOOT} min-w-0 grow`}>
          <HGrip />
          <span className="truncate pl-px">C:\Users\akhil\Documents\fab wearables.pdsprj</span>
        </div>
        {["No CRC errors", "No DRC errors"].map((t) => (
          <div key={t} className={`${BAR} ${FOOT} w-[129px]`}>
            <HGrip />
            <Icon name="check" className="ml-0.5 size-[18px]" />
            <span className="ml-4 whitespace-nowrap">{t}</span>
          </div>
        ))}
        <div className={`${BAR} ${FOOT} w-[297px]`}>
          <HGrip />
          <output className="w-32 text-right">-15.500</output>
          <output className="w-[130px] text-right">+53.900</output>
          <span className="ml-2 text-[#000080]">mm</span>
        </div>
      </footer>
    </div>
  );
}
